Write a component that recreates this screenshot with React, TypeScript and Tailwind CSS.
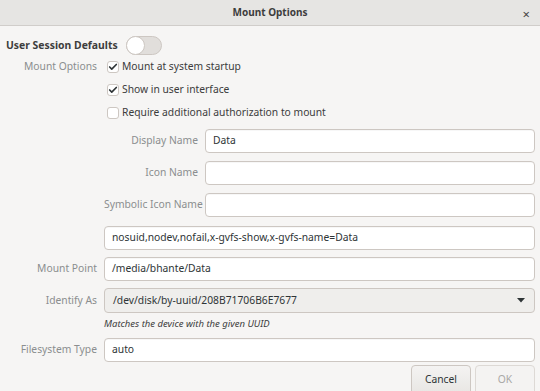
import { Check } from "lucide-react";

const font = { fontFamily: '"Noto Sans", "Open Sans", sans-serif' };

const Field = ({ value = "" }: { value?: string }) => (
  <div className="h-[24px] flex-1 flex items-center px-[7px] bg-white border border-[#cdc7c2] rounded-[4px] text-[10.3px] text-[#2e3436] shadow-[inset_0_1px_0_rgba(0,0,0,0.03)]">
    {value}
  </div>
);

const CheckRow = ({ checked, label }: { checked: boolean; label: string }) => (
  <div className="h-[23px] flex items-center gap-[3px] ml-[3px]">
    <span className="w-[12px] h-[12px] flex items-center justify-center bg-white border border-[#cdc7c2] rounded-[3px]">
      {checked && <Check size={10} strokeWidth={4} className="text-[#2e3436]" />}
    </span>
    <span className="text-[10.3px] text-[#3c3c3c]">{label}</span>
  </div>
);

export default function App() {
  return (
    <div style={font} className="w-[540px] h-[391px] overflow-hidden bg-[#f6f5f4] flex flex-col text-[10.3px] whitespace-nowrap">
      <div className="h-[26px] shrink-0 relative flex items-center justify-center bg-[#e6e5e3] border-b border-[#d0cdca]">
        <span className="text-[10px] font-bold text-[#3d3d3d]">Mount Options</span>
        <span className="absolute right-[10px] top-[5px] text-[13px] text-[#444]">×</span>
      </div>

      <div className="flex items-center gap-[8px] pl-[6px] pt-[10px] h-[38px]">
        <span className="text-[10.4px] font-bold text-[#3d3d3d]">User Session Defaults</span>
        <span className="w-[36px] h-[19px] rounded-full bg-[#e1dedb] border border-[#cdc7c2] flex items-center">
          <span className="w-[19px] h-[19px] -ml-[1px] rounded-full bg-white border border-[#cdc7c2]" />
        </span>
      </div>

      <div className="grid grid-cols-[97px_1fr] gap-x-[7px] pr-[5px]">
        <div className="text-right text-[#8b8e8f] h-[23px] flex items-center justify-end">Mount Options</div>
        <div className="flex flex-col">
          <CheckRow checked label="Mount at system startup" />
          <CheckRow checked label="Show in user interface" />
          <CheckRow checked={false} label="Require additional authorization to mount" />
          <div className="grid grid-cols-[94px_1fr] gap-x-[7px] gap-y-[8px] mt-[5px] items-center">
            <span className="text-right text-[#8b8e8f]">Display Name</span>
            <Field value="Data" />
            <span className="text-right text-[#8b8e8f]">Icon Name</span>
            <Field />
            <span className="text-right text-[#8b8e8f]">Symbolic Icon Name</span>
            <Field />
          </div>
        </div>

        <div className="col-span-2 grid grid-cols-[97px_1fr] gap-x-[7px] gap-y-[7px] mt-[9px] items-center">
          <span />
          <Field value="nosuid,nodev,nofail,x-gvfs-show,x-gvfs-name=Data" />
          <span className="text-right text-[#8b8e8f]">Mount Point</span>
          <Field value="/media/bhante/Data" />
          <span className="text-right text-[#8b8e8f]">Identify As</span>
          <div className="h-[25px] flex items-center justify-between pl-[8px] pr-[9px] bg-[#efeeec] border border-[#cdc7c2] rounded-[4px] text-[#2e3436]">
            <span>/dev/disk/by-uuid/208B71706B6E7677</span>
            <svg width="8" height="5" viewBox="0 0 8 5">
              <path d="M0 0 L8 0 L4 4.5 Z" fill="#2e3436" />
            </svg>
          </div>
          <span />
          <span className="-mt-[3px] h-[14px] leading-[14px] text-[9.5px] italic text-[#3c3c3c]">Matches the device with the given UUID</span>
          <span className="text-right text-[#8b8e8f]">Filesystem Type</span>
          <Field value="auto" />
        </div>
      </div>

      <div className="flex justify-end gap-[4px] pr-[5px] mt-[3px]">
        <button className="w-[60px] h-[30px] shrink-0 rounded-[4px] border border-[#cdc7c2] bg-gradient-to-b from-[#f4f3f2] to-[#e8e6e3] text-[10.3px] text-[#2e3436]">
          Cancel
        </button>
        <button className="w-[60px] h-[30px] shrink-0 rounded-[4px] border border-[#ddd9d5] bg-[#f4f3f2] text-[10.3px] text-[#a9a8a6]">
          OK
        </button>
      </div>
    </div>
  );
}
